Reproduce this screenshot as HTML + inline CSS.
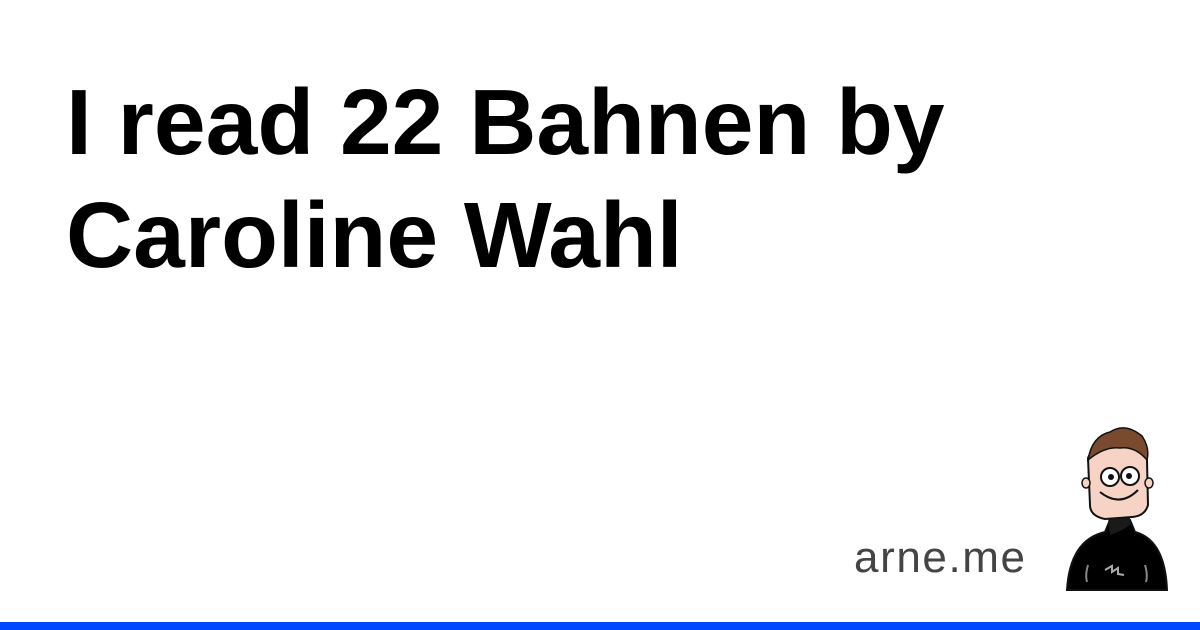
<!DOCTYPE html>
<html><head><meta charset="utf-8"><style>
html,body{margin:0;padding:0;width:1200px;height:630px;background:#fff;overflow:hidden;position:relative;font-family:"Liberation Sans",Arial,sans-serif}
h1{position:absolute;left:66px;top:66px;margin:0;font-size:93px;line-height:113px;font-weight:bold;color:#000;width:1000px}
.site{position:absolute;left:854px;top:529px;font-size:44px;letter-spacing:1.6px;color:#444;line-height:58px}
.bar{position:absolute;left:0;top:622px;width:1200px;height:8px;background:#0047ff}
svg{position:absolute;left:1050px;top:420px}
</style></head><body>
<h1>I read 22 Bahnen by<br>Caroline Wahl</h1>
<div class="site">arne.me</div>
<svg width="130" height="200" viewBox="0 0 130 200">
<path d="M17 170 Q20 120 55 112 L60 100 L80 100 L85 112 Q115 120 117 170 Z" fill="#000" stroke="#111" stroke-width="2"/>
<path d="M58 98 L60 115 Q70 112 80 105 L80 92 Z" fill="#1a1a1a"/>
<path d="M38 38 Q45 20 70 18 Q94 20 97 40 L98 85 Q95 96 82 97 L55 99 Q40 96 40 85 Z" fill="#f6d3c4" stroke="#111" stroke-width="2"/>
<path d="M38 40 Q42 16 60 12 Q75 2 92 16 Q100 28 97 40 Q85 26 70 28 Q55 26 38 40Z" fill="#7a4a2e" stroke="#111" stroke-width="1.5"/>
<ellipse cx="36" cy="63" rx="4" ry="5" fill="#f6d3c4" stroke="#111" stroke-width="1.5"/>
<ellipse cx="99" cy="63" rx="4" ry="5" fill="#f6d3c4" stroke="#111" stroke-width="1.5"/>
<circle cx="60" cy="57" r="9" fill="#fff" stroke="#111" stroke-width="2"/>
<circle cx="80" cy="56" r="9" fill="#fff" stroke="#111" stroke-width="2"/>
<circle cx="61" cy="57" r="3" fill="#111"/><circle cx="79" cy="56" r="3" fill="#111"/>
<path d="M50 72 Q70 88 88 70" fill="none" stroke="#111" stroke-width="2"/>
<path d="M38 145 Q35 155 37 162 M95 145 Q98 155 96 162" stroke="#888" stroke-width="2" fill="none"/>
<path d="M55 150 L62 146 L62 152 L68 148 L68 154 L74 155" stroke="#aaa" stroke-width="2" fill="none"/>
</svg>
<div class="bar"></div>
</body></html>
